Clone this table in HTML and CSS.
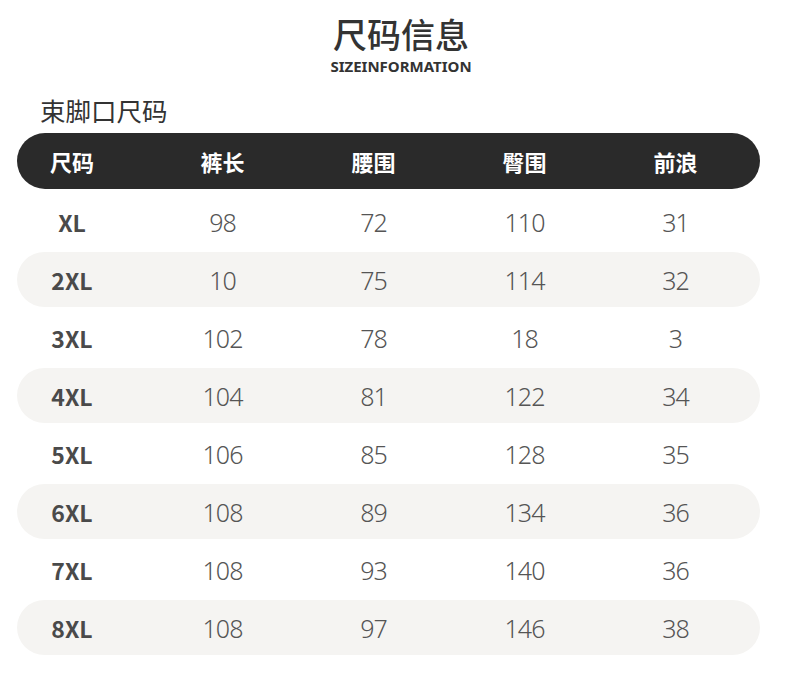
FILE: index.html
```html
<!DOCTYPE html>
<html lang="zh">
<head>
<meta charset="utf-8">
<link rel="stylesheet" href="styles.css">
</head>
<body>
<div class="page">
  <h1 class="title">尺码信息</h1>
  <div class="subtitle">SIZEINFORMATION</div>
  <div class="section">束脚口尺码</div>
  <div class="table">
    <div class="row head"><div class="c first">尺码</div><div class="c">裤长</div><div class="c">腰围</div><div class="c">臀围</div><div class="c">前浪</div></div>
    <div class="body">
      <div class="row"><div class="c first">XL</div><div class="c">98</div><div class="c">72</div><div class="c">110</div><div class="c">31</div></div>
      <div class="row alt"><div class="c first">2XL</div><div class="c">10</div><div class="c">75</div><div class="c">114</div><div class="c">32</div></div>
      <div class="row"><div class="c first">3XL</div><div class="c">102</div><div class="c">78</div><div class="c">18</div><div class="c">3</div></div>
      <div class="row alt"><div class="c first">4XL</div><div class="c">104</div><div class="c">81</div><div class="c">122</div><div class="c">34</div></div>
      <div class="row"><div class="c first">5XL</div><div class="c">106</div><div class="c">85</div><div class="c">128</div><div class="c">35</div></div>
      <div class="row alt"><div class="c first">6XL</div><div class="c">108</div><div class="c">89</div><div class="c">134</div><div class="c">36</div></div>
      <div class="row"><div class="c first">7XL</div><div class="c">108</div><div class="c">93</div><div class="c">140</div><div class="c">36</div></div>
      <div class="row alt"><div class="c first">8XL</div><div class="c">108</div><div class="c">97</div><div class="c">146</div><div class="c">38</div></div>
    </div>
  </div>
</div>
</body>
</html>
```
FILE: styles.css
```css
html, body {
  margin: 0;
  padding: 0;
  background: #ffffff;
}
.page {
  width: 790px;
  font-family: "Noto Sans CJK SC", "Noto Sans", sans-serif;
  color: #333;
}
.title {
  margin: 0;
  padding-top: 17px;
  height: 34px;
  line-height: 34px;
  font-size: 34px;
  font-weight: 500;
  text-align: center;
  color: #333;
  padding-left: 12px;
}
.subtitle {
  margin-top: 6px;
  height: 18px;
  line-height: 18px;
  font-family: "Noto Sans", sans-serif;
  font-size: 15px;
  font-weight: 700;
  text-align: center;
  color: #333;
  padding-left: 12px;
}
.section {
  margin-top: 20px;
  margin-left: 40px;
  height: 30px;
  line-height: 30px;
  font-size: 25.5px;
  font-weight: 400;
  color: #333;
}
.table {
  margin: 8px 30px 0 17px;
}
.row {
  display: grid;
  grid-template-columns: 130px repeat(4, 151px);
  height: 55px;
  align-items: center;
  border-radius: 28px;
}
.row .c {
  text-align: center;
  font-family: "Noto Sans", sans-serif;
  font-weight: 300;
  font-size: 25px;
  letter-spacing: -1px;
  color: #555;
}
.row .c.first {
  padding-right: 20px;
  font-family: "Noto Sans CJK SC", sans-serif;
  font-weight: 700;
  font-size: 23px;
  letter-spacing: 0;
  color: #4a4a4a;
}
.row.head {
  height: 56px;
  background: #2a2a2a;
}
.row.head .c {
  font-family: "Noto Sans CJK SC", sans-serif;
  font-weight: 700;
  font-size: 22px;
  letter-spacing: 0;
  color: #ffffff;
}
.body {
  padding-top: 5px;
  display: flex;
  flex-direction: column;
  gap: 3px;
}
.row.alt {
  background: #f5f4f2;
}
```
